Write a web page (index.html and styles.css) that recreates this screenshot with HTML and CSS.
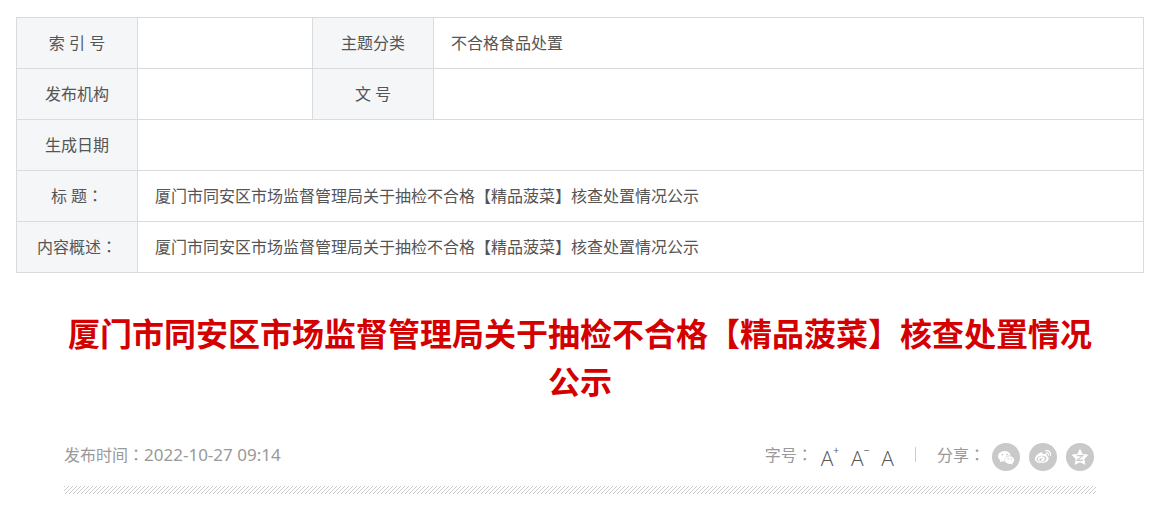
FILE: index.html
```html
<!DOCTYPE html>
<html lang="zh-CN">
<head>
	<meta charset="UTF-8">
	<meta name="viewport" content="width=device-width, initial-scale=1.0">
	<title>核查处置情况公示</title>
	<link rel="stylesheet" href="styles.css">
</head>
<body>
	<table class="info-table">
		<colgroup>
			<col class="col-label">
			<col class="col-value">
			<col class="col-label">
			<col>
		</colgroup>
		<tbody>
			<tr>
				<th scope="row">索 引 号</th>
				<td></td>
				<th scope="row">主题分类</th>
				<td>不合格食品处置</td>
			</tr>
			<tr>
				<th scope="row">发布机构</th>
				<td></td>
				<th scope="row">文 号</th>
				<td></td>
			</tr>
			<tr>
				<th scope="row">生成日期</th>
				<td colspan="3"></td>
			</tr>
			<tr>
				<th scope="row">标 题<span class="colon" lang="zh-TW">：</span></th>
				<td colspan="3">厦门市同安区市场监督管理局关于抽检不合格【精品菠菜】核查处置情况公示</td>
			</tr>
			<tr>
				<th scope="row">内容概述<span class="colon" lang="zh-TW">：</span></th>
				<td colspan="3">厦门市同安区市场监督管理局关于抽检不合格【精品菠菜】核查处置情况公示</td>
			</tr>
		</tbody>
	</table>

	<div class="article">
		<h1>厦门市同安区市场监督管理局关于抽检不合格【精品菠菜】核查处置情况公示</h1>

		<div class="meta">
			<div class="date">发布时间<span class="colon" lang="zh-TW">：</span><time datetime="2022-10-27T09:14">2022-10-27 09:14</time></div>

			<div class="tools">
				<span>字号<span class="colon" lang="zh-TW">：</span></span>
				<div class="sizes">
					<button type="button" class="size-btn" aria-label="放大字号">A<sup>+</sup></button>
					<button type="button" class="size-btn" aria-label="缩小字号">A<sup>−</sup></button>
					<button type="button" class="size-btn" aria-label="默认字号">A</button>
				</div>
				<span class="line"></span>
				<span>分享<span class="colon" lang="zh-TW">：</span></span>
				<div class="share">
					<a href="#" aria-label="微信">
						<svg viewBox="0 0 28 28">
							<path fill="#fff" d="M12.800 8C9 8 6 10.300 6 13.300c0 1.700.9 3.100 2.400 4.100l-.7 2 2.400-1.200c.9.200 1.700.300 2.600.200-.8-3.200 1.900-5.800 5.400-5.800h.7C18.200 9.900 15.800 8 12.800 8z"/>
							<path fill="#fff" d="M17.600 13.200c-2.700 0-4.800 1.700-4.800 3.900s2.100 3.900 4.800 3.900c.6 0 1.100-.1 1.600-.2l1.700.9-.5-1.500c1.100-.7 1.700-1.800 1.700-3.100 0-2.200-2-3.900-4.500-3.900z"/>
							<g fill="#c9c9c9">
								<circle cx="10.400" cy="11.600" r=".9"/>
								<circle cx="15" cy="11.600" r=".9"/>
								<circle cx="16.100" cy="15.900" r=".7"/>
								<circle cx="19.300" cy="15.900" r=".7"/>
							</g>
						</svg>
					</a>
					<a href="#" aria-label="微博">
						<svg viewBox="0 0 28 28">
							<path fill="#fff" d="M12.400 9.300c-2.700.5-6.500 4.100-6.500 6.900 0 2.400 2.900 3.900 6.300 3.900 4.400 0 7.500-2.500 7.500-4.700 0-1.300-1-2-1.900-2.300.5-1.300.1-2.100-1-2.300-1-.2-2 .1-3.100.5.300-1.100.1-2.200-1.300-2z"/>
							<ellipse cx="12.500" cy="15.900" rx="5" ry="3.200" fill="#c9c9c9" transform="rotate(-8 12.500 15.900)"/>
							<ellipse cx="12.300" cy="16" rx="3.500" ry="2.700" fill="#fff" transform="rotate(-15 12.300 16)"/>
							<circle cx="11.600" cy="16.500" r="1.200" fill="#c9c9c9"/>
							<circle cx="13.500" cy="15.300" r=".5" fill="#c9c9c9"/>
							<path fill="none" stroke="#fff" stroke-width="1.200" stroke-linecap="round" d="M16.700 7.700c3.200-.7 5.600 1.900 4.700 5M17.200 9.900c1.600-.3 2.600.8 2.200 2.300"/>
						</svg>
					</a>
					<a href="#" aria-label="QQ空间">
						<svg viewBox="0 0 28 28">
							<path fill="#fff" stroke="#fff" stroke-linejoin="round" d="M14 6.500l2.300 4.900 5.400.7-3.900 3.800 1 5.400-4.800-2.600-4.800 2.600 1-5.400-3.900-3.800 5.400-.7z"/>
							<path fill="none" stroke="#c9c9c9" stroke-width="1.200" d="M10.800 12.700h5.900l-5.400 4.400c1.900.4 3.900.4 5.700.1"/>
						</svg>
					</a>
				</div>
			</div>
		</div>
		<div class="stripe"></div>
	</div>
</body>
</html>
```
FILE: styles.css
```css
body {
	margin: 17px 21px 0 16px;
	background: #fff;
	color: #555;
	font-family: "Noto Sans", "Noto Sans CJK SC", sans-serif;
	font-size: 16px;
	line-height: 24px;
}

.colon {
	font-family: "Noto Sans CJK TC", sans-serif;
	line-height: 1;
}

.info-table {
	width: 100%;
	table-layout: fixed;
	border-collapse: collapse;
}

.info-table tr {
	height: 51px;
}

.col-label {
	width: 121px;
}

.col-value {
	width: 175px;
}

.info-table th,
.info-table td {
	box-sizing: border-box;
	padding: 0 17px;
	border: 1px solid #dadbdd;
	text-align: left;
	font-weight: normal;
}

.info-table th {
	padding: 0;
	background: #f4f6f8;
	text-align: center;
}

.article {
	margin: 37px 48px 0;
}

h1 {
	margin: 0;
	color: #d40000;
	font-size: 32px;
	line-height: 48px;
	text-align: center;
}

.meta {
	display: flex;
	justify-content: space-between;
	margin-top: 37px;
	padding-right: 2px;
	color: #999;
}

.date time {
	font-size: 17px;
}

.tools {
	display: flex;
}

.sizes {
	display: flex;
	gap: 12px;
	margin-left: 8px;
}

.size-btn {
	display: flex;
	padding: 0;
	border: none;
	background: none;
	color: #555;
	font-family: "Open Sans", sans-serif;
	font-size: 21px;
	font-weight: 300;
	line-height: 30px;
	cursor: pointer;
}

.size-btn sup {
	font-size: 10px;
	font-weight: 400;
	line-height: 14px;
}

.line {
	width: 1px;
	height: 15px;
	margin: 4px 21px 0;
	background: #ccc;
}

.share {
	display: flex;
	gap: 9px;
	margin-left: 7px;
}

.share a {
	width: 28px;
	height: 28px;
	border-radius: 50%;
	background: #c9c9c9;
}

.share svg {
	display: block;
}

.stripe {
	height: 8px;
	margin-top: 13px;
	background: linear-gradient(135deg, #ccc 13%, #fff 13% 50%, #ccc 50% 63%, #fff 63%) 0 0 / 4px 4px;
}
```
